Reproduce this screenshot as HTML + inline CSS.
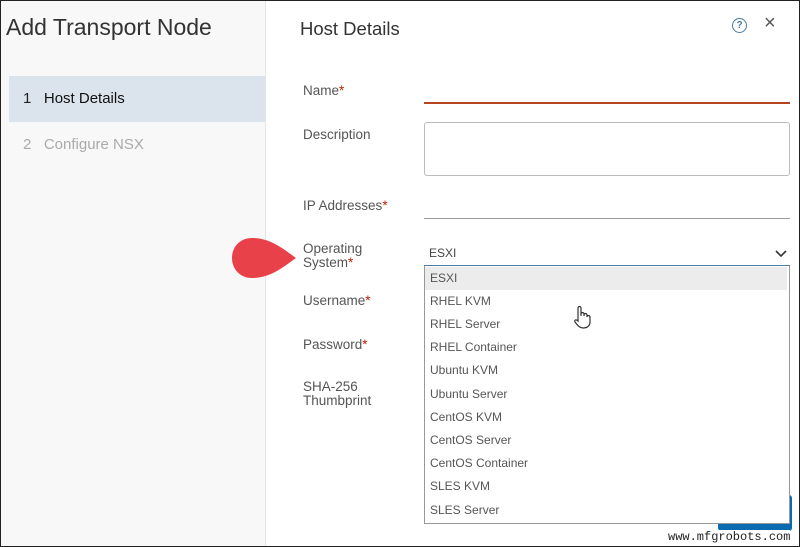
<!DOCTYPE html><html><head><style>
body{margin:0;width:800px;height:547px;overflow:hidden;font-family:"Liberation Sans",sans-serif;}
#f{position:absolute;left:0;top:0;width:798px;height:545px;border:1px solid #222;background:#fff;overflow:hidden}
.a{position:absolute;white-space:nowrap}
#side{position:absolute;left:0;top:0;width:264px;height:545px;background:#f8f8f8;border-right:1px solid #e6e6e6}
.l{font-size:13.5px;color:#555}
.s{color:#c21d00}
.u{position:absolute;height:1px;background:#999}
.it{position:absolute;left:0;width:362px;height:23px;font-size:12px;color:#555;line-height:23px;padding-left:5px;box-sizing:border-box}
</style></head><body><div id="f">
<div id="side"></div>
<div class="a" style="left:5px;top:13px;font-size:23px;color:#333">Add Transport Node</div>
<div class="a" style="left:8px;top:75px;width:256px;height:46px;background:#dbe3ec"></div>
<div class="a" style="left:22px;top:89px;font-size:15px;color:#222">1&nbsp;&nbsp;&nbsp;<span style="color:#111">Host Details</span></div>
<div class="a" style="left:22px;top:135px;font-size:15px;color:#aaa">2&nbsp;&nbsp;&nbsp;Configure NSX</div>
<div class="a" style="left:299px;top:17px;font-size:18.5px;color:#333">Host Details</div>
<div class="a" style="left:731px;top:17px;width:13px;height:13px;border:1.5px solid #4a7aa0;border-radius:50%;font-size:10px;color:#4a7aa0;text-align:center;line-height:13px;font-weight:bold">?</div>
<div class="a" style="left:763px;top:11px;font-size:20px;color:#555">×</div>
<div class="a l" style="left:302px;top:82px">Name<span class="s">*</span></div>
<div class="u" style="left:423px;top:101px;width:366px;height:2px;background:#b5431f"></div>
<div class="a l" style="left:302px;top:126px">Description</div>
<div class="a" style="left:423px;top:121px;width:364px;height:52px;border:1px solid #bbb;border-radius:3px"></div>
<div class="a l" style="left:302px;top:197px">IP Addresses<span class="s">*</span></div>
<div class="u" style="left:423px;top:217px;width:366px"></div>
<div class="a l" style="left:302px;top:241px;line-height:14px">Operating<br>System<span class="s">*</span></div>
<div class="a l" style="left:302px;top:292px">Username<span class="s">*</span></div>
<div class="a l" style="left:302px;top:336px">Password<span class="s">*</span></div>
<div class="a l" style="left:302px;top:379px;line-height:14px">SHA-256<br>Thumbprint</div>
<svg class="a" style="left:229px;top:235px" width="68" height="44"><path d="M22 2 C40 2 52 12 66 22 C52 32 40 42 22 42 C10 42 2 33 2 22 C2 11 10 2 22 2Z" fill="#e8414a"/></svg>
<div class="a" style="left:428px;top:245px;font-size:12px;color:#444">ESXI</div>
<svg class="a" style="left:774px;top:249px" width="12" height="8"><path d="M1 1 L6 6 L11 1" stroke="#333" stroke-width="1.6" fill="none"/></svg>
<div class="u" style="left:423px;top:264px;width:366px;height:2px;background:#4a7ea8"></div>
<div class="a" style="left:717px;top:494px;width:74px;height:36px;background:#0a6bb0;border-radius:3px"></div>
<div class="a" style="left:423px;top:265px;width:364px;height:257px;background:#fff;border:1px solid #999;border-top:none">
<div class="it" style="top:1px;background:#ececec">ESXI</div>
<div class="it" style="top:24px">RHEL KVM</div>
<div class="it" style="top:47px">RHEL Server</div>
<div class="it" style="top:70px">RHEL Container</div>
<div class="it" style="top:93px">Ubuntu KVM</div>
<div class="it" style="top:117px">Ubuntu Server</div>
<div class="it" style="top:140px">CentOS KVM</div>
<div class="it" style="top:163px">CentOS Server</div>
<div class="it" style="top:186px">CentOS Container</div>
<div class="it" style="top:209px">SLES KVM</div>
<div class="it" style="top:233px">SLES Server</div>
</div>
<svg class="a" style="left:571px;top:304px" width="20" height="24"><path d="M6 16 V3 a1.5 1.5 0 0 1 3 0 V11 V9 a1.5 1.5 0 0 1 3 0 V11 V10 a1.5 1.5 0 0 1 3 0 V12 a1.5 1.5 0 0 1 3 0 V17 C18 21 15 23 11 23 C8 23 6 21 3 17 C2 15 4 14 6 16Z" fill="#fff" stroke="#333" stroke-width="1.2"/></svg>
<div class="a" style="left:667px;top:529px;font-family:'Liberation Mono',monospace;font-size:12px;color:#222;background:#fff">www.mfgrobots.com</div>
</div></body></html>
